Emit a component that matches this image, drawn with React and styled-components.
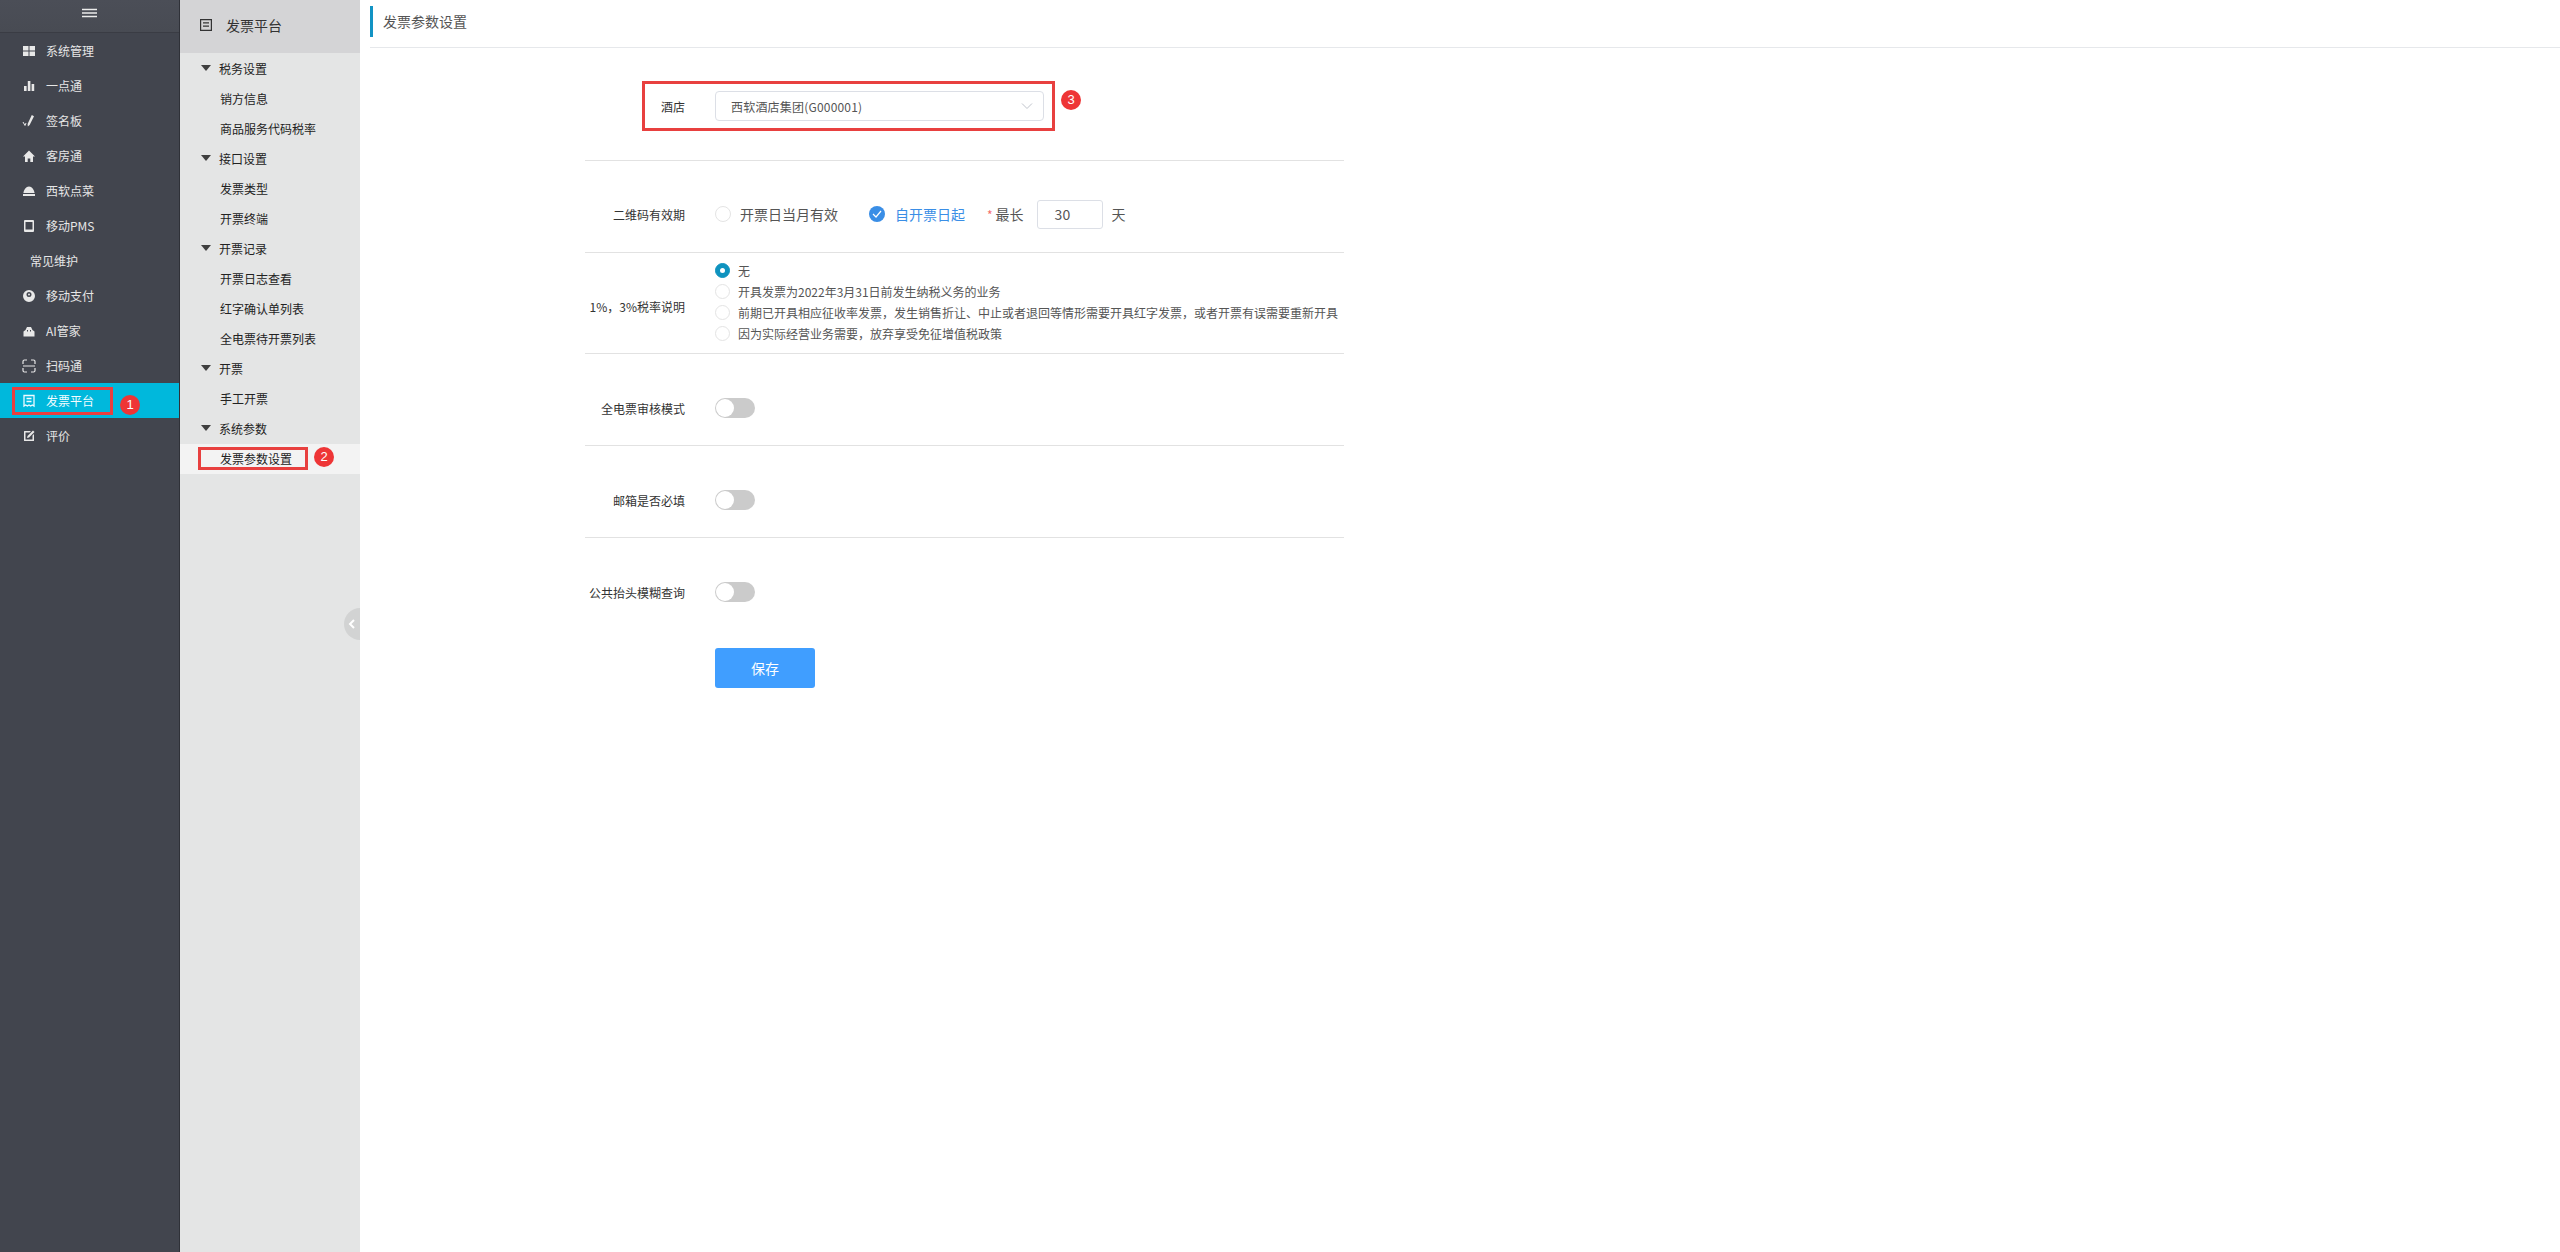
import React from "react";
import styled, { createGlobalStyle } from "styled-components";

const Global = createGlobalStyle`
  html, body { margin: 0; padding: 0; background: #fff; }
  * { box-sizing: border-box; }
  body { font-family: "Noto Sans CJK SC", "Liberation Sans", sans-serif; font-size: 12px; color: #333; }
`;

const Page = styled.div`
  display: grid;
  grid-template-columns: 180px 180px 1fr;
  width: 2560px;
  height: 1252px;
  overflow: hidden;
`;

const Nav = styled.aside`
  background: #42454e;
  border-right: 1px solid #2f3138;
  color: #e6e6e6;
`;
const NavTop = styled.div`
  height: 33px;
  display: flex;
  align-items: center;
  justify-content: center;
  padding-bottom: 7px;
  background: linear-gradient(#4b4e57, #484b53);
  border-bottom: 1px solid #3a3c44;
`;
const NavList = styled.ul`
  list-style: none;
  margin: 0;
  padding: 0;
`;
const NavItem = styled.li`
  position: relative;
  height: 35px;
  display: flex;
  align-items: center;
  gap: 10px;
  padding-left: ${(p) => (p.$plain ? "30px" : "22px")};
  background: ${(p) => (p.$active ? "#00b8dc" : "transparent")};
  color: ${(p) => (p.$active ? "#f4fdff" : "#e6e6e6")};
  svg { flex: none; }
`;
const Mark = styled.span`
  position: absolute;
  border: 3px solid #e8403f;
  left: ${(p) => p.$l}px;
  top: ${(p) => p.$t}px;
  width: ${(p) => p.$w}px;
  height: ${(p) => p.$h}px;
`;
const Badge = styled.span`
  position: absolute;
  left: ${(p) => p.$l}px;
  top: ${(p) => p.$t}px;
  width: 20px;
  height: 20px;
  border-radius: 50%;
  background: #ee3536;
  color: #fff;
  font: 13px/20px "Liberation Sans", sans-serif;
  text-align: center;
`;

const Sub = styled.aside`
  position: relative;
  background: #e4e5e5;
  color: #222;
`;
const SubHead = styled.div`
  height: 53px;
  background: #d4d4d6;
  display: flex;
  align-items: center;
  gap: 14px;
  padding: 0 0 3px 20px;
  font-size: 14px;
  color: #333;
`;
const SubList = styled.ul`
  list-style: none;
  margin: 0;
  padding: 1px 0 0;
`;
const SubItem = styled.li`
  position: relative;
  height: 30px;
  line-height: 30px;
  padding-left: ${(p) => (p.$group ? "21px" : "40px")};
  background: ${(p) => (p.$active ? "#f3f3f3" : "transparent")};
  display: flex;
  align-items: center;
  gap: 8px;
`;
const Caret = styled.i`
  width: 0;
  height: 0;
  border-left: 5.5px solid transparent;
  border-right: 5.5px solid transparent;
  border-top: 6px solid #3f3f3f;
  margin-top: -3px;
`;
const Collapse = styled.button`
  position: absolute;
  right: -16px;
  top: 608px;
  width: 32px;
  height: 32px;
  border: 0;
  padding: 0 0 0 2px;
  border-radius: 50%;
  background: #d2d3d3;
  display: flex;
  align-items: center;
  justify-content: flex-start;
`;

const Clip = styled.div`
  position: relative;
  z-index: 2;
  background: #fff;
`;

const Main = styled.main`
  padding: 0 0 0 10px;
  min-width: 0;
  background: #fff;
`;
const TitleBar = styled.div`
  height: 48px;
  border-bottom: 1px solid #e6e8eb;
  padding-top: 6px;
`;
const Title = styled.h1`
  margin: 0;
  height: 31px;
  border-left: 3px solid #1293c4;
  padding-left: 10px;
  font-size: 14px;
  font-weight: 400;
  line-height: 30px;
  color: #555;
`;

const Form = styled.div`
  width: 759px;
  margin-left: 215px;
`;
const Row = styled.div`
  display: flex;
  align-items: center;
  height: ${(p) => p.$h}px;
  padding-top: ${(p) => p.$pt || 0}px;
  border-bottom: ${(p) => (p.$last ? "0" : "1px solid #e2e2e2")};
`;
const Label = styled.label`
  width: 100px;
  margin-right: 30px;
  text-align: right;
  flex: none;
  font-size: 12px;
  color: #333;
  margin-top: ${(p) => p.$mt || 0}px;
`;
const Boxed = styled.div`
  position: relative;
  display: flex;
  align-items: center;
  width: 100%;
`;
const RedFrame = styled.span`
  position: absolute;
  left: 57px;
  top: -10px;
  width: 413px;
  height: 50px;
  border: 3px solid #e8403f;
  pointer-events: none;
`;
const Select = styled.div`
  width: 329px;
  height: 30px;
  border: 1px solid #dcdfe6;
  border-radius: 4px;
  display: flex;
  align-items: center;
  justify-content: space-between;
  padding: 0 10px 0 15px;
  font-size: 12px;
  letter-spacing: 0.2px;
  color: #555;
`;
const Options = styled.div`
  display: flex;
  align-items: center;
  font-size: 14px;
  color: #555;
`;
const Dot = styled.span`
  flex: none;
  display: inline-flex;
  align-items: center;
  justify-content: center;
  width: ${(p) => p.$size || 16}px;
  height: ${(p) => p.$size || 16}px;
  border-radius: 50%;
  border: 1px solid ${(p) => (p.$on ? "#0f93bf" : "#e4e4e4")};
  background: ${(p) => (p.$on ? "#0f93bf" : "#fff")};
  &::after {
    content: "";
    display: ${(p) => (p.$on ? "block" : "none")};
    width: 5px;
    height: 5px;
    border-radius: 50%;
    background: #fff;
  }
`;
const Check = styled.span`
  flex: none;
  width: 16px;
  height: 16px;
  border-radius: 50%;
  background: #3a8ee6;
  display: inline-flex;
  align-items: center;
  justify-content: center;
`;
const OptText = styled.span`
  margin-left: ${(p) => p.$ml}px;
  margin-right: ${(p) => p.$mr || 0}px;
  color: ${(p) => p.$color || "#555"};
`;
const Star = styled.span`
  color: #f56c6c;
  margin-right: 3px;
  font-size: 12px;
`;
const NumBox = styled.div`
  width: 66px;
  height: 29px;
  margin: 0 9px 0 13px;
  border: 1px solid #dcdfe6;
  border-radius: 3px;
  padding-left: 17px;
  line-height: 27px;
  font-size: 14px;
  color: #555;
`;
const RadioList = styled.div`
  display: flex;
  flex-direction: column;
  gap: 7px;
  margin-top: -2px;
`;
const RadioLine = styled.div`
  display: flex;
  align-items: center;
  height: 14px;
  gap: 8px;
  font-size: 12px;
  color: #555;
  white-space: nowrap;
`;
const Toggle = styled.span`
  display: block;
  width: 40px;
  height: 20px;
  border-radius: 10px;
  background: #cbcbcb;
  position: relative;
  &::after {
    content: "";
    position: absolute;
    left: 1px;
    top: 1px;
    width: 18px;
    height: 18px;
    border-radius: 50%;
    background: #fff;
  }
`;
const SaveRow = styled.div`
  padding: 18px 0 0 130px;
`;
const Save = styled.button`
  width: 100px;
  height: 40px;
  border: 0;
  border-radius: 3px;
  background: #409eff;
  color: #fff;
  font: 14px "Noto Sans CJK SC", sans-serif;
`;

const I = ({ children, w = 14, vb = "0 0 14 14" }) => (
  <svg width={w} height={14} viewBox={vb} fill="#e8e8e8">{children}</svg>
);

const icons = {
  grid: <I><path d="M1 2h5.500v4.500H1zM7.500 2H13v4.500H7.500zM1 7.500h5.500V12H1zM7.500 7.500H13V12H7.500z" /></I>,
  bars: <I><path d="M2 7h2.600v5H2zM5.800 2h2.600v10H5.800zM9.600 5h2.600v7H9.600z" /></I>,
  sign: <I><path d="M9.800 1 12 2.300 7.600 11 5.900 12.400 5.600 10z" /><path d="M1 8l2 3.500L4 9" fill="none" stroke="#e8e8e8" strokeWidth="1" /></I>,
  home: <I><path d="M7 1.500 13 7.500h-2V13H8.300V9.500H5.700V13H3V7.500H1z" /></I>,
  dish: <I><path d="M7 2.500c3 0 5 3 5.600 6.500H1.400C2 5.500 4 2.500 7 2.500zM1 10h12v2H1z" /></I>,
  phone: <I><path fillRule="evenodd" d="M3 1h8a1 1 0 0 1 1 1v10a1 1 0 0 1-1 1H3a1 1 0 0 1-1-1V2a1 1 0 0 1 1-1zm.500 2v7.500h7V3z" /></I>,
  pay: <I><path fillRule="evenodd" d="M7 1a6 6 0 1 1 0 12A6 6 0 0 1 7 1zm0 2a2.500 2.500 0 1 0 0 5 2.500 2.500 0 0 0 0-5z" /><circle cx="7" cy="5.500" r="1" /></I>,
  ai: <I><path fillRule="evenodd" d="M1.500 12.500V7.500L3.500 6 5 3h4l1.500 3 2 1.500v5zM5 6v1.500h1V6zm3 0v1.500h1V6z" /></I>,
  scan: (
    <svg width="14" height="14" viewBox="0 0 14 14" fill="none" stroke="#e8e8e8" strokeWidth="1.200">
      <path d="M1 5V2.500A1.500 1.500 0 0 1 2.500 1H5M9 1h2.500A1.500 1.500 0 0 1 13 2.500V5M13 9v2.500a1.500 1.500 0 0 1-1.500 1.500H9M5 13H2.500A1.500 1.500 0 0 1 1 11.500V9M1 7h12" />
    </svg>
  ),
  receipt: (
    <svg width="14" height="14" viewBox="0 0 14 14" fill="none" stroke="#f0fbff" strokeWidth="1.300">
      <path d="M2 1.500h10v10.500l-1.700-1-1.600 1-1.700-1-1.700 1-1.600-1L2 12zM4.500 4.500h5M4.500 7.500h5" />
    </svg>
  ),
  edit: <I><path fillRule="evenodd" d="M2.500 2H9L7.500 3.500H3.500v7h7v-4L12 5v6.500a.500.500 0 0 1-.500.500h-9a.500.500 0 0 1-.500-.500v-9A.500.500 0 0 1 2.500 2z" /><path d="M11 1.500 12.500 3 7 8.500 5 9l.500-2z" /></I>,
};

const navItems = [
  ["grid", "系统管理"], ["bars", "一点通"], ["sign", "签名板"], ["home", "客房通"],
  ["dish", "西软点菜"], ["phone", "移动PMS"], [null, "常见维护"], ["pay", "移动支付"],
  ["ai", "AI管家"], ["scan", "扫码通"], ["receipt", "发票平台"], ["edit", "评价"],
];

const subItems = [
  ["税务设置", 1], ["销方信息"], ["商品服务代码税率"], ["接口设置", 1], ["发票类型"], ["开票终端"],
  ["开票记录", 1], ["开票日志查看"], ["红字确认单列表"], ["全电票待开票列表"], ["开票", 1], ["手工开票"],
  ["系统参数", 1], ["发票参数设置", 0, 1],
];

const radios = [
  "无",
  "开具发票为2022年3月31日前发生纳税义务的业务",
  "前期已开具相应征收率发票，发生销售折让、中止或者退回等情形需要开具红字发票，或者开票有误需要重新开具",
  "因为实际经营业务需要，放弃享受免征增值税政策",
];

export default function App() {
  return (
    <Page>
      <Global />
      <Nav>
        <NavTop>
          <svg width="15" height="10" viewBox="0 0 15 10" stroke="#ececec" strokeWidth="1.300">
            <path d="M0 1.500h15M0 5h15M0 8.500h15" />
          </svg>
        </NavTop>
        <NavList>
          {navItems.map(([ic, label]) => {
            const active = label === "发票平台";
            return (
              <NavItem key={label} $active={active} $plain={!ic}>
                {ic && icons[ic]}
                <span>{label}</span>
                {active && (
                  <>
                    <Mark $l={12} $t={4} $w={101} $h={28} />
                    <Badge $l={120} $t={12}>1</Badge>
                  </>
                )}
              </NavItem>
            );
          })}
        </NavList>
      </Nav>
      <Sub>
        <SubHead>
          <svg width="12" height="12" viewBox="0 0 12 12" fill="none" stroke="#333" strokeWidth="1.200">
            <path d="M.6.6h10.800v10.800H.6zM3 3.800h6M3 7.200h6" />
          </svg>
          <span>发票平台</span>
        </SubHead>
        <SubList>
          {subItems.map(([label, group, active]) => (
            <SubItem key={label} $group={group} $active={active}>
              {group ? <Caret /> : null}
              <span>{label}</span>
              {active && (
                <>
                  <Mark $l={18} $t={3} $w={110} $h={23} />
                  <Badge $l={134} $t={3}>2</Badge>
                </>
              )}
            </SubItem>
          ))}
        </SubList>
        <Collapse aria-label="收起">
          <svg width="12" height="14" viewBox="0 0 12 14" fill="none" stroke="#fff" strokeWidth="2">
            <path d="M8 3 4 7l4 4" />
          </svg>
        </Collapse>
      </Sub>
      <Clip>
        <Main>
          <TitleBar><Title>发票参数设置</Title></TitleBar>
          <Form>
            <Row $h={113} $pt={4}>
              <Boxed>
                <RedFrame />
                <Label>酒店</Label>
                <Select>
                  <span>西软酒店集团(G000001)</span>
                  <svg width="12" height="8" viewBox="0 0 12 8" fill="none" stroke="#c0c4cc" strokeWidth="1">
                    <path d="M1 1.500 6 6.500l5-5" />
                  </svg>
                </Select>
                <Badge $l={476} $t={-1}>3</Badge>
              </Boxed>
            </Row>
            <Row $h={92} $pt={15}>
              <Label>二维码有效期</Label>
              <Options>
                <Dot />
                <OptText $ml={9} $mr={31}>开票日当月有效</OptText>
                <Check>
                  <svg width="10" height="8" viewBox="0 0 10 8" fill="none" stroke="#fff" strokeWidth="1.200">
                    <path d="M1 4l3 3 5-6" />
                  </svg>
                </Check>
                <OptText $ml={10} $mr={22} $color="#3a8ee6">自开票日起</OptText>
                <Star>*</Star>
                <span>最长</span>
                <NumBox>30</NumBox>
                <span>天</span>
              </Options>
            </Row>
            <Row $h={101}>
              <Label $mt={6}>1%，3%税率说明</Label>
              <RadioList>
                {radios.map((r, i) => (
                  <RadioLine key={r}>
                    <Dot $on={i === 0} $size={15} />
                    <span>{r}</span>
                  </RadioLine>
                ))}
              </RadioList>
            </Row>
            <Row $h={92} $pt={17}><Label>全电票审核模式</Label><Toggle /></Row>
            <Row $h={92} $pt={17}><Label>邮箱是否必填</Label><Toggle /></Row>
            <Row $h={92} $pt={16} $last><Label>公共抬头模糊查询</Label><Toggle /></Row>
            <SaveRow><Save>保存</Save></SaveRow>
          </Form>
        </Main>
      </Clip>
    </Page>
  );
}
